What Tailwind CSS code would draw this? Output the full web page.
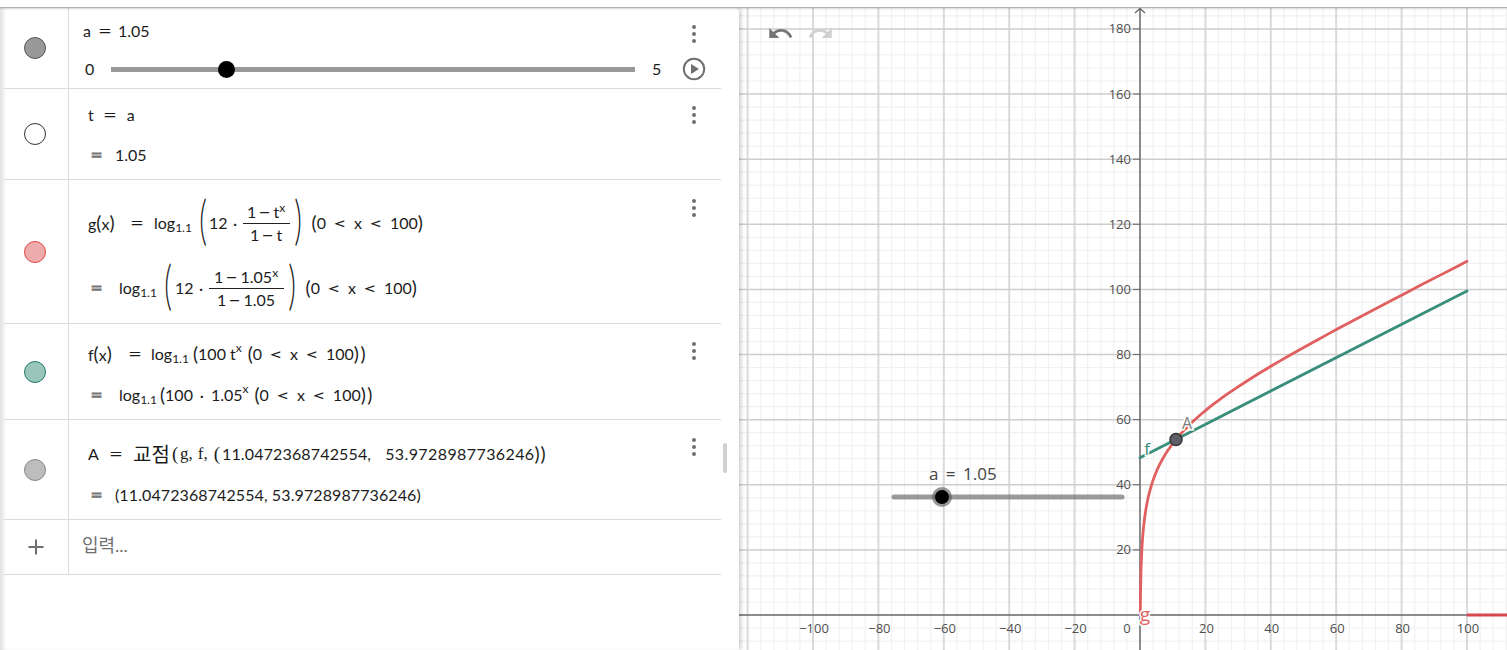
<!DOCTYPE html>
<html lang="ko">
<head>
    <meta charset="UTF-8">
    <title>GeoGebra</title>
    <script src="https://cdn.jsdelivr.net/npm/@tailwindcss/browser@4"></script>
</head>
<body class="h-[650px] w-[1507px] overflow-hidden bg-white flex flex-col font-['Lato','Noto_Sans_CJK_KR',sans-serif] text-[16px] text-[#1c1c1c]">
    <div class="h-[8px] shrink-0 bg-white border-b border-[#b0b0b0] shadow-[0_1px_2px_rgba(0,0,0,0.15)] relative z-20"></div>
    <div class="flex flex-1 min-h-0">
        <!-- algebra panel -->
        <div class="w-[739px] shrink-0 h-full bg-white rounded-tr-[4px] shadow-[inset_5px_0_4px_-2px_rgba(0,0,0,0.13),2px_0_4px_rgba(0,0,0,0.2)] relative z-10 pl-[4px] pr-[18px]">
            <!-- a slider -->
            <div class="flex h-[81px] border-b border-[#dcdcdc]">
                <div class="w-[65px] shrink-0 border-r border-[#dcdcdc] pr-[2px] flex items-center justify-center">
                    <div class="w-[22px] h-[22px] rounded-full bg-[#999999] border border-[#555]"></div>
                </div>
                <div class="flex-1 pl-[14px] pt-[13px]">
                    <div class="h-[20px] leading-[20px] flex">a<span class="w-[14px] ml-[7px] mr-[6px] text-center scale-x-150">=</span>1.05</div>
                    <div class="flex items-center h-[20px] mt-[18px]">
                        <span class="w-[28px] pl-[2px]">0</span>
                        <div class="w-[524px] h-[5px] bg-[#999999] relative">
                            <div class="absolute left-[107px] top-[-6px] w-[17px] h-[17px] rounded-full bg-black"></div>
                        </div>
                        <span class="ml-[17px]">5</span>
                    </div>
                </div>
                <div class="w-[54px] shrink-0 flex flex-col items-center pt-[17px]">
                    <div class="flex flex-col gap-[3px]"><i class="w-[4px] h-[4px] rounded-full bg-[#6f6f6f]"></i><i class="w-[4px] h-[4px] rounded-full bg-[#6f6f6f]"></i><i class="w-[4px] h-[4px] rounded-full bg-[#6f6f6f]"></i></div>
                    <svg class="mt-[14px]" width="24" height="24" viewBox="0 0 24 24"><circle cx="12" cy="12" r="10.2" fill="none" stroke="#707070" stroke-width="2"/><path d="M9 7 L17 12 L9 17 Z" fill="#707070"/></svg>
                </div>
            </div>
            <!-- t -->
            <div class="flex h-[91px] border-b border-[#dcdcdc]">
                <div class="w-[65px] shrink-0 border-r border-[#dcdcdc] pr-[2px] flex items-center justify-center">
                    <div class="w-[22px] h-[22px] rounded-full bg-white border border-[#333]"></div>
                </div>
                <div class="flex-1 pl-[19px] pt-[16px]">
                    <div class="h-[20px] leading-[20px] flex">t<span class="w-[14px] ml-[9px] mr-[10px] text-center scale-x-150">=</span>a</div>
                    <div class="h-[20px] leading-[20px] mt-[20px] flex"><span class="w-[27px] pl-[3px]"><span class="inline-block w-[11px] text-center text-[#777] scale-x-125 [-webkit-text-stroke:1px_#777]">=</span></span>1.05</div>
                </div>
                <div class="w-[54px] shrink-0 flex justify-center pt-[17px]">
                    <div class="flex flex-col gap-[3px]"><i class="w-[4px] h-[4px] rounded-full bg-[#6f6f6f]"></i><i class="w-[4px] h-[4px] rounded-full bg-[#6f6f6f]"></i><i class="w-[4px] h-[4px] rounded-full bg-[#6f6f6f]"></i></div>
                </div>
            </div>
            <!-- g -->
            <div class="flex h-[144px] border-b border-[#dcdcdc]">
                <div class="w-[65px] shrink-0 border-r border-[#dcdcdc] pr-[2px] flex items-center justify-center">
                    <div class="w-[22px] h-[22px] rounded-full bg-[#edabab] border border-[#e04545]"></div>
                </div>
                <div class="flex-1 pl-[19px] pt-[18px]">
                    <div class="h-[50px] flex items-center whitespace-nowrap">
                        <span class="w-[31px]">g<span class="text-[19px]">(</span>x<span class="text-[19px]">)</span></span>
                        <span class="w-[14px] ml-[11px] mr-[10px] text-center scale-x-150">=</span>
                        <span class="w-[40px]">log<sub class="text-[12px]">1.1</sub></span>
                        <span class="w-[10px] ml-[4px] flex justify-center text-[54px] leading-[50px] font-light scale-x-[0.55] relative top-[-4px]">(</span>
                        <span class="ml-[1px]">12</span><span class="w-[15px] text-center">·</span>
                        <span class="w-[47px] flex flex-col items-center"><span class="leading-[22px]">1<span class="inline-block mx-[4px] scale-x-[1.3]">−</span>t<sup class="text-[12px]">x</sup></span><span class="w-full text-center leading-[22px] border-t border-[#222]">1<span class="inline-block mx-[4px] scale-x-[1.3]">−</span>t</span></span>
                        <span class="w-[10px] ml-[3px] flex justify-center text-[54px] leading-[50px] font-light scale-x-[0.55] relative top-[-4px]">)</span>
                        <span class="ml-[9px] flex"><span class="text-[19px] leading-[24px]">(</span>0<span class="w-[14px] mx-[7px] text-center scale-x-150">&lt;</span>x<span class="w-[14px] mx-[7px] text-center scale-x-150">&lt;</span>100<span class="text-[19px] leading-[24px]">)</span></span>
                    </div>
                    <div class="h-[50px] flex items-center whitespace-nowrap mt-[15px]">
                        <span class="w-[31px] pl-[3px]"><span class="inline-block w-[11px] text-center text-[#777] scale-x-125 [-webkit-text-stroke:1px_#777]">=</span></span>
                        <span class="w-[40px]">log<sub class="text-[12px]">1.1</sub></span>
                        <span class="w-[10px] ml-[4px] flex justify-center text-[54px] leading-[50px] font-light scale-x-[0.55] relative top-[-4px]">(</span>
                        <span class="ml-[2px]">12</span><span class="w-[15px] text-center">·</span>
                        <span class="w-[75px] flex flex-col items-center"><span class="leading-[22px]">1<span class="inline-block mx-[4px] scale-x-[1.3]">−</span>1.05<sup class="text-[12px]">x</sup></span><span class="w-full text-center leading-[22px] border-t border-[#222]">1<span class="inline-block mx-[4px] scale-x-[1.3]">−</span>1.05</span></span>
                        <span class="w-[10px] ml-[3px] flex justify-center text-[54px] leading-[50px] font-light scale-x-[0.55] relative top-[-4px]">)</span>
                        <span class="ml-[9px] flex"><span class="text-[19px] leading-[24px]">(</span>0<span class="w-[14px] mx-[7px] text-center scale-x-150">&lt;</span>x<span class="w-[14px] mx-[7px] text-center scale-x-150">&lt;</span>100<span class="text-[19px] leading-[24px]">)</span></span>
                    </div>
                </div>
                <div class="w-[54px] shrink-0 flex justify-center pt-[19px]">
                    <div class="flex flex-col gap-[3px]"><i class="w-[4px] h-[4px] rounded-full bg-[#6f6f6f]"></i><i class="w-[4px] h-[4px] rounded-full bg-[#6f6f6f]"></i><i class="w-[4px] h-[4px] rounded-full bg-[#6f6f6f]"></i></div>
                </div>
            </div>
            <!-- f -->
            <div class="flex h-[96px] border-b border-[#dcdcdc]">
                <div class="w-[65px] shrink-0 border-r border-[#dcdcdc] pr-[2px] flex items-center justify-center">
                    <div class="w-[22px] h-[22px] rounded-full bg-[#99c5bb] border border-[#1f7a67]"></div>
                </div>
                <div class="flex-1 pl-[19px] pt-[20px]">
                    <div class="h-[20px] flex items-center whitespace-nowrap">
                        <span class="w-[29px]">f<span class="text-[19px]">(</span>x<span class="text-[19px]">)</span></span>
                        <span class="w-[14px] ml-[11px] mr-[9px] text-center scale-x-150">=</span>
                        <span class="w-[42px]">log<sub class="text-[12px]">1.1</sub></span>
                        <span class="flex items-center"><span class="text-[19px] leading-[24px]">(</span>100<span class="ml-[4px]">t</span><sup class="text-[12px] top-[-6px]">x</sup><span class="ml-[6px] text-[19px] leading-[24px]">(</span>0<span class="w-[14px] mx-[7px] text-center scale-x-150">&lt;</span>x<span class="w-[14px] mx-[7px] text-center scale-x-150">&lt;</span>100<span class="text-[19px] leading-[24px] tracking-[1.5px]">))</span></span>
                    </div>
                    <div class="h-[20px] flex items-center whitespace-nowrap mt-[21px]">
                        <span class="w-[31px] pl-[3px]"><span class="inline-block w-[11px] text-center text-[#777] scale-x-125 [-webkit-text-stroke:1px_#777]">=</span></span>
                        <span class="w-[41px]">log<sub class="text-[12px]">1.1</sub></span>
                        <span class="flex items-center"><span class="text-[19px] leading-[24px]">(</span>100<span class="w-[18px] text-center">·</span>1.05<sup class="text-[12px] top-[-6px]">x</sup><span class="ml-[6px] text-[19px] leading-[24px]">(</span>0<span class="w-[14px] mx-[7px] text-center scale-x-150">&lt;</span>x<span class="w-[14px] mx-[7px] text-center scale-x-150">&lt;</span>100<span class="text-[19px] leading-[24px] tracking-[1.5px]">))</span></span>
                    </div>
                </div>
                <div class="w-[54px] shrink-0 flex justify-center pt-[18px]">
                    <div class="flex flex-col gap-[3px]"><i class="w-[4px] h-[4px] rounded-full bg-[#6f6f6f]"></i><i class="w-[4px] h-[4px] rounded-full bg-[#6f6f6f]"></i><i class="w-[4px] h-[4px] rounded-full bg-[#6f6f6f]"></i></div>
                </div>
            </div>
            <!-- A -->
            <div class="flex h-[100px] border-b border-[#dcdcdc]">
                <div class="w-[65px] shrink-0 border-r border-[#dcdcdc] pr-[2px] flex items-center justify-center">
                    <div class="w-[22px] h-[22px] rounded-full bg-[#bdbdbd] border border-[#888]"></div>
                </div>
                <div class="flex-1 pl-[19px] pt-[24px]">
                    <div class="h-[20px] flex items-center whitespace-nowrap">
                        <span class="w-[11px]">A</span>
                        <span class="w-[14px] ml-[10px] mr-[10px] text-center scale-x-150">=</span>
                        <span class="text-[20px] w-[39px]">교점</span>
                        <span class="flex items-center w-[50px] font-['Liberation_Serif',serif] text-[17px]"><span class="text-[19px] leading-[24px] w-[8px]">(</span>g,<span class="ml-[5px]">f,</span><span class="ml-[6px] text-[19px] leading-[24px]">(</span></span>
                        <span class="tracking-[0.15px]">11.0472368742554,</span>
                        <span class="ml-[14px] tracking-[0.4px]">53.9728987736246</span>
                        <span class="text-[19px] leading-[24px] tracking-[1px]">))</span>
                    </div>
                    <div class="h-[20px] flex items-center whitespace-nowrap mt-[21px]">
                        <span class="w-[27px] pl-[3px]"><span class="inline-block w-[11px] text-center text-[#777] scale-x-125 [-webkit-text-stroke:1px_#777]">=</span></span>
                        <span class="tracking-[0.1px]">(11.0472368742554, 53.9728987736246)</span>
                    </div>
                </div>
                <div class="w-[54px] shrink-0 flex justify-center pt-[18px]">
                    <div class="flex flex-col gap-[3px]"><i class="w-[4px] h-[4px] rounded-full bg-[#6f6f6f]"></i><i class="w-[4px] h-[4px] rounded-full bg-[#6f6f6f]"></i><i class="w-[4px] h-[4px] rounded-full bg-[#6f6f6f]"></i></div>
                </div>
            </div>
            <!-- input -->
            <div class="flex h-[55px] border-b border-[#dcdcdc]">
                <div class="w-[65px] shrink-0 border-r border-[#dcdcdc] flex items-center justify-center">
                    <svg width="18" height="18" viewBox="0 0 18 18"><path d="M9 1.5 V16.5 M1.5 9 H16.5" stroke="#6f6f6f" stroke-width="2" fill="none"/></svg>
                </div>
                <div class="flex-1 pl-[13px] pt-[14px] text-[#707070] text-[18px] leading-[22px]">입력...</div>
            </div>
            <div class="absolute left-[723px] top-[435px] w-[4px] h-[30px] rounded-full bg-[#d0d0d0]"></div>
        </div>
        <!-- graphics view -->
        <div class="flex-1 relative overflow-hidden">
            <svg id="graph" class="absolute inset-0" width="768" height="642" viewBox="739 8 768 642"></svg>
            <button class="absolute left-[28px] top-[12px]"><svg width="27" height="27" viewBox="0 0 24 24"><path fill="#757575" d="M12.5 8c-2.65 0-5.05.99-6.9 2.6L2 7v9h9l-3.62-3.62c1.39-1.16 3.16-1.88 5.12-1.88 3.54 0 6.55 2.31 7.6 5.5l2.37-.78C21.08 11.03 17.15 8 12.5 8z"/></svg></button>
            <button class="absolute left-[68px] top-[12px]"><svg width="27" height="27" viewBox="0 0 24 24"><path fill="#d0d0d0" d="M18.4 10.6C16.55 8.99 14.15 8 11.5 8c-4.65 0-8.58 3.03-9.96 7.22L3.9 16c1.05-3.19 4.05-5.5 7.6-5.5 1.95 0 3.73.72 5.12 1.88L13 16h9V7l-3.6 3.6z"/></svg></button>
        </div>
    </div>

    <script>
        const X0 = 1140, Y0 = 615, SX = 3.27, SY = 3.256;
        const px = x => X0 + x * SX;
        const py = y => Y0 - y * SY;
        const log11 = v => Math.log(v) / Math.log(1.1);
        const g = x => log11(12 * (Math.pow(1.05, x) - 1) / 0.05);
        const f = x => log11(100 * Math.pow(1.05, x));

        let svg = '';
        const line = (x1, y1, x2, y2, color, w) => {
            svg += `<line x1="${x1}" y1="${y1}" x2="${x2}" y2="${y2}" stroke="${color}" stroke-width="${w}"/>`;
        };
        const label = (x, y, text, anchor, color, size, extra = '') => {
            svg += `<text x="${x}" y="${y}" text-anchor="${anchor}" fill="${color}" font-size="${size}" font-family="Open Sans, sans-serif" ${extra}>${text}</text>`;
        };
        const halo = 'stroke="#ffffff" stroke-width="3" paint-order="stroke"';

        // grid
        for (let i = -32; i <= 32; i++) {
            if (i % 5 !== 0) line(px(i * 4), 8, px(i * 4), 650, '#f1f1f1', 1.2);
        }
        for (let i = -8; i <= 48; i++) {
            if (i % 5 !== 0) line(739, py(i * 4), 1507, py(i * 4), '#f1f1f1', 1.2);
        }
        for (let i = -120; i <= 120; i += 20) {
            if (i !== 0) line(px(i), 8, px(i), 650, '#dadada', 2);
        }
        for (let i = 20; i <= 180; i += 20) {
            line(739, py(i), 1507, py(i), '#cdcdcd', 1.5);
        }

        // axes
        line(739, Y0, 1507, Y0, '#666666', 1.5);
        line(X0, 9, X0, 650, '#666666', 1.5);
        svg += `<path d="M${X0 - 5} 13 L${X0} 8.5 L${X0 + 5} 13" fill="none" stroke="#666666" stroke-width="1.3"/>`;

        // labels
        for (let i = -100; i <= 100; i += 20) {
            if (i !== 0) label(px(i) + 1, 633, i < 0 ? '\u2212' + (-i) : i, 'middle', '#4f4f4f', 13);
        }
        label(1127, 633, '0', 'middle', '#4f4f4f', 13);
        for (let i = 20; i <= 180; i += 20) {
            line(1133, py(i), X0, py(i), '#666666', 1);
            label(1131, py(i) + 4.5, i, 'end', '#4f4f4f', 13);
        }

        // curves
        let gPath = `M${px(0.086)} ${py(g(0.086))}`;
        for (let x = 0.1; x <= 100; x *= 1.06) gPath += ` L${px(x)} ${py(g(x))}`;
        gPath += ` L${px(100)} ${py(g(100))}`;
        svg += `<path d="${gPath}" fill="none" stroke="#e06060" stroke-width="2.8" stroke-linecap="round"/>`;
        svg += `<line x1="${px(100)}" y1="${Y0}" x2="1507" y2="${Y0}" stroke="#d9484f" stroke-width="2.8"/>`;
        svg += `<line x1="${px(0)}" y1="${py(f(0))}" x2="${px(100)}" y2="${py(f(100))}" stroke="#3a8f7c" stroke-width="2.8" stroke-linecap="round"/>`;

        // point and curve captions
        label(1187, 429, 'A', 'middle', '#7c7c7c', 16, halo);
        label(1147, 455, 'f', 'middle', '#2e8b75', 17, halo);
        label(1145, 621, 'g', 'middle', '#e06060', 19, halo);
        svg += `<circle cx="1176" cy="439.5" r="6" fill="#5e5e66" stroke="#333333" stroke-width="1.5"/>`;

        // slider on the canvas
        svg += `<line x1="894" y1="497" x2="1122" y2="497" stroke="#666666" stroke-opacity="0.65" stroke-width="5" stroke-linecap="round"/>`;
        svg += `<circle cx="942" cy="497" r="10" fill="#555555" fill-opacity="0.6"/>`;
        svg += `<circle cx="942" cy="497" r="7" fill="#000000"/>`;
        label(929, 480, 'a = 1.05', 'start', '#444444', 17, 'word-spacing="3"');

        document.getElementById('graph').innerHTML = svg;
    </script>
</body>
</html>
